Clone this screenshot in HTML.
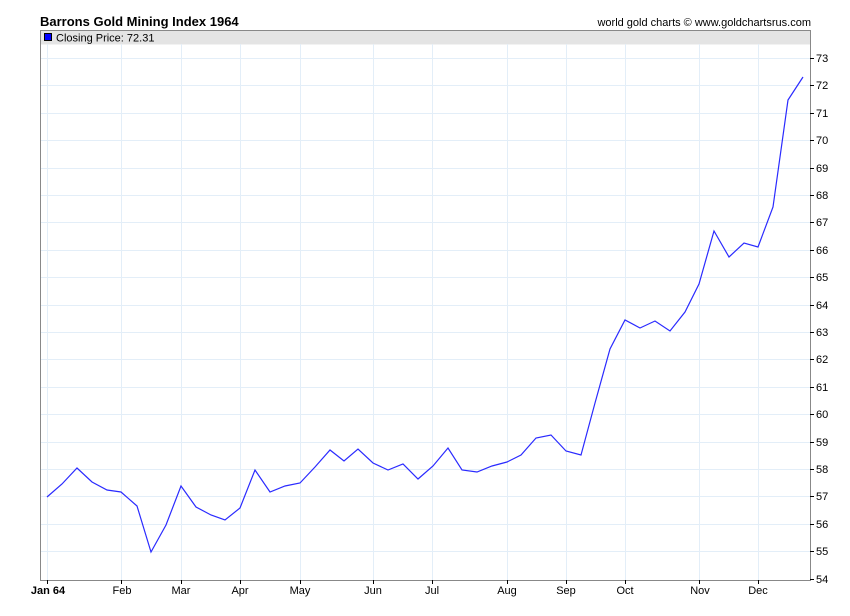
<!DOCTYPE html>
<html><head><meta charset="utf-8"><style>
body{margin:0;background:#fff;}
svg{display:block;font-family:"Liberation Sans",sans-serif;}
</style></head><body>
<svg width="850" height="616" viewBox="0 0 850 616" xmlns="http://www.w3.org/2000/svg">
<rect width="850" height="616" fill="#fff"/>
<text x="40" y="26" font-size="13" font-weight="bold" fill="#000">Barrons Gold Mining Index 1964</text>
<text x="811" y="26" font-size="11" fill="#000" text-anchor="end">world gold charts © www.goldchartsrus.com</text>
<rect x="40.5" y="30.5" width="770" height="14" fill="#e4e4e4"/>
<g stroke="#e3eef8" stroke-width="1">
<line x1="47.5" y1="44" x2="47.5" y2="580"/><line x1="121.5" y1="44" x2="121.5" y2="580"/><line x1="181.5" y1="44" x2="181.5" y2="580"/><line x1="240.5" y1="44" x2="240.5" y2="580"/><line x1="300.5" y1="44" x2="300.5" y2="580"/><line x1="373.5" y1="44" x2="373.5" y2="580"/><line x1="432.5" y1="44" x2="432.5" y2="580"/><line x1="507.5" y1="44" x2="507.5" y2="580"/><line x1="566.5" y1="44" x2="566.5" y2="580"/><line x1="625.5" y1="44" x2="625.5" y2="580"/><line x1="699.5" y1="44" x2="699.5" y2="580"/><line x1="758.5" y1="44" x2="758.5" y2="580"/>
</g>
<g stroke="#e3eef8" stroke-width="1" id="hg"></g>
<g stroke="#e3eef8">
<line x1="40" y1="58.5" x2="810" y2="58.5"/><line x1="40" y1="85.5" x2="810" y2="85.5"/><line x1="40" y1="113.5" x2="810" y2="113.5"/><line x1="40" y1="140.5" x2="810" y2="140.5"/><line x1="40" y1="168.5" x2="810" y2="168.5"/><line x1="40" y1="195.5" x2="810" y2="195.5"/><line x1="40" y1="222.5" x2="810" y2="222.5"/><line x1="40" y1="250.5" x2="810" y2="250.5"/><line x1="40" y1="277.5" x2="810" y2="277.5"/><line x1="40" y1="305.5" x2="810" y2="305.5"/><line x1="40" y1="332.5" x2="810" y2="332.5"/><line x1="40" y1="359.5" x2="810" y2="359.5"/><line x1="40" y1="387.5" x2="810" y2="387.5"/><line x1="40" y1="414.5" x2="810" y2="414.5"/><line x1="40" y1="442.5" x2="810" y2="442.5"/><line x1="40" y1="469.5" x2="810" y2="469.5"/><line x1="40" y1="496.5" x2="810" y2="496.5"/><line x1="40" y1="524.5" x2="810" y2="524.5"/><line x1="40" y1="551.5" x2="810" y2="551.5"/>
</g>
<rect x="40.5" y="30.5" width="770" height="550" fill="none" stroke="#888" stroke-width="1"/>
<rect x="44.5" y="33.5" width="7" height="7" fill="#0000ff" stroke="#000" stroke-width="1"/>
<text x="56" y="41.5" font-size="11" fill="#000">Closing Price: 72.31</text>
<polyline fill="none" stroke="#2a2aff" stroke-width="1.2" points="47,497 62,484 77,468 92,482 107,490 121,492 137,506 151,552 166,525 181,486 196,507 211,515 225,520 240,508 255,470 270,492 285,486 300,483 315,467 330,450 344,461 358,449 373,463 388,470 403,464 418,479 433,466 448,448 462,470 477,472 492,466 507,462 521,455 536,438 551,435 566,451 581,455 595,403 610,349 625,320 640,328 655,321 670,331 685,312 699,284 714,231 729,257 744,243 758,247 773,207 788,100 803,77"/>
<g stroke="#000" stroke-width="1">
<line x1="810" y1="58.5" x2="814" y2="58.5"/><line x1="810" y1="85.5" x2="814" y2="85.5"/><line x1="810" y1="113.5" x2="814" y2="113.5"/><line x1="810" y1="140.5" x2="814" y2="140.5"/><line x1="810" y1="168.5" x2="814" y2="168.5"/><line x1="810" y1="195.5" x2="814" y2="195.5"/><line x1="810" y1="222.5" x2="814" y2="222.5"/><line x1="810" y1="250.5" x2="814" y2="250.5"/><line x1="810" y1="277.5" x2="814" y2="277.5"/><line x1="810" y1="305.5" x2="814" y2="305.5"/><line x1="810" y1="332.5" x2="814" y2="332.5"/><line x1="810" y1="359.5" x2="814" y2="359.5"/><line x1="810" y1="387.5" x2="814" y2="387.5"/><line x1="810" y1="414.5" x2="814" y2="414.5"/><line x1="810" y1="442.5" x2="814" y2="442.5"/><line x1="810" y1="469.5" x2="814" y2="469.5"/><line x1="810" y1="496.5" x2="814" y2="496.5"/><line x1="810" y1="524.5" x2="814" y2="524.5"/><line x1="810" y1="551.5" x2="814" y2="551.5"/><line x1="810" y1="579.5" x2="814" y2="579.5"/>
<line x1="47.5" y1="580" x2="47.5" y2="584"/><line x1="121.5" y1="580" x2="121.5" y2="584"/><line x1="181.5" y1="580" x2="181.5" y2="584"/><line x1="240.5" y1="580" x2="240.5" y2="584"/><line x1="300.5" y1="580" x2="300.5" y2="584"/><line x1="373.5" y1="580" x2="373.5" y2="584"/><line x1="432.5" y1="580" x2="432.5" y2="584"/><line x1="507.5" y1="580" x2="507.5" y2="584"/><line x1="566.5" y1="580" x2="566.5" y2="584"/><line x1="625.5" y1="580" x2="625.5" y2="584"/><line x1="699.5" y1="580" x2="699.5" y2="584"/><line x1="758.5" y1="580" x2="758.5" y2="584"/>
</g>
<g font-size="11" fill="#000">
<text x="816" y="62">73</text><text x="816" y="89">72</text><text x="816" y="117">71</text><text x="816" y="144">70</text><text x="816" y="172">69</text><text x="816" y="199">68</text><text x="816" y="226">67</text><text x="816" y="254">66</text><text x="816" y="281">65</text><text x="816" y="309">64</text><text x="816" y="336">63</text><text x="816" y="363">62</text><text x="816" y="391">61</text><text x="816" y="418">60</text><text x="816" y="446">59</text><text x="816" y="473">58</text><text x="816" y="500">57</text><text x="816" y="528">56</text><text x="816" y="555">55</text><text x="816" y="583">54</text>
</g>
<g font-size="11" fill="#000" text-anchor="middle">
<text x="48" y="594" font-weight="bold">Jan 64</text><text x="122" y="594">Feb</text><text x="181" y="594">Mar</text><text x="240" y="594">Apr</text><text x="300" y="594">May</text><text x="373" y="594">Jun</text><text x="432" y="594">Jul</text><text x="507" y="594">Aug</text><text x="566" y="594">Sep</text><text x="625" y="594">Oct</text><text x="700" y="594">Nov</text><text x="758" y="594">Dec</text>
</g>
</svg>
</body></html>
